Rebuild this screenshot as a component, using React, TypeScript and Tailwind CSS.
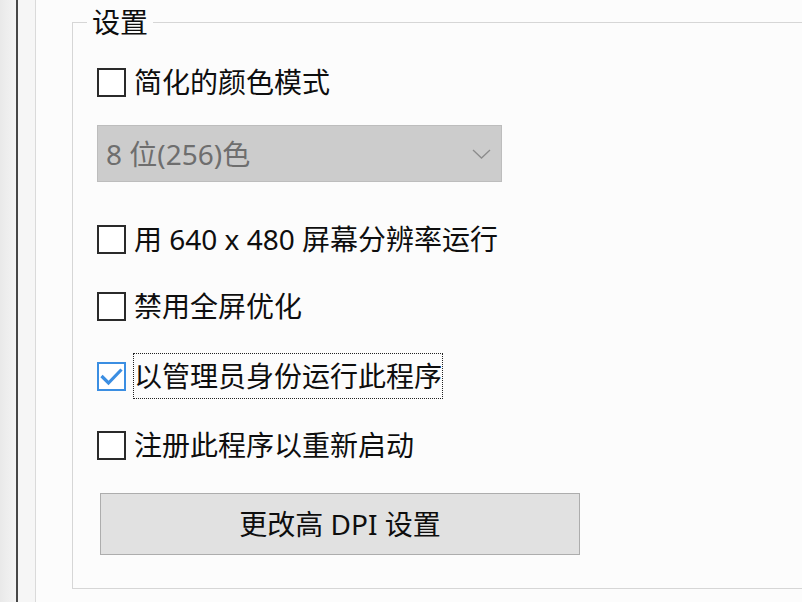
import React from "react";

type Opt = { label: string; checked?: boolean; focused?: boolean; mt: string };

const FONT = { fontFamily: '"Noto Sans", "Noto Sans CJK SC", sans-serif' };

const Check: React.FC<{ checked?: boolean }> = ({ checked }) =>
  checked ? (
    <span className="flex h-[29px] w-[29px] shrink-0 items-center justify-center border-2 border-[#3b8ee2] bg-white">
      <svg width="23" height="19" viewBox="0 0 23 19" fill="none">
        <path d="M1.5 9 L8.5 16 L21.5 2.5" stroke="#3b8ee2" strokeWidth="3.2" />
      </svg>
    </span>
  ) : (
    <span className="block h-[29px] w-[29px] shrink-0 border-2 border-[#2a2a2a] bg-white" />
  );

const Row: React.FC<Opt> = ({ label, checked, focused, mt }) => (
  <div className={`flex h-[46px] items-center ${mt}`}>
    <Check checked={checked} />
    <span
      className={`ml-[7px] flex h-[46px] items-center whitespace-nowrap border text-[28px] leading-none text-[#0e0e0e] ${
        focused ? "border-dotted border-[#222]" : "border-transparent"
      }`}
    >
      {label}
    </span>
  </div>
);

export default function App() {
  return (
    <div className="flex h-[602px] w-full overflow-hidden bg-[#fcfcfc]" style={FONT}>
      {/* window edges on the left */}
      <div className="w-[16px] shrink-0 bg-gradient-to-r from-[#e9e9e9] to-[#f4f4f4]" />
      <div className="w-[2px] shrink-0 bg-[#474747]" />
      <div className="w-[17px] shrink-0 bg-[#f6f6f6]" />
      <div className="w-px shrink-0 bg-[#dadada]" />

      <div className="pl-[36px] pt-[5px]">
        <fieldset className="w-[760px] border border-[#d6d6d6] pb-[33px] pl-[24px]">
          <legend className="-ml-[10px] px-[5px] text-[28px] leading-[34px] text-[#0e0e0e]">设置</legend>

          <Row label="简化的颜色模式" mt="mt-[20px]" />

          <div className="mt-[20px] flex h-[57px] w-[405px] items-center justify-between border border-[#bdbdbd] bg-[#cccccc] pl-[8px] pr-[10px]">
            <span className="text-[28px] leading-none text-[#6e6e6e]">8 位(256)色</span>
            <svg width="19" height="10" viewBox="0 0 19 10" fill="none">
              <path d="M1 1 L9.5 9 L18 1" stroke="#8c8c8c" strokeWidth="1.3" />
            </svg>
          </div>

          <Row label="用 640 x 480 屏幕分辨率运行" mt="mt-[34px]" />
          <Row label="禁用全屏优化" mt="mt-[21px]" />
          <Row label="以管理员身份运行此程序" checked focused mt="mt-[24px]" />
          <Row label="注册此程序以重新启动" mt="mt-[23px]" />

          <button className="ml-[3px] mt-[25px] flex h-[62px] w-[480px] items-center justify-center border border-[#adadad] bg-[#e1e1e1] text-[28px] leading-none text-[#0e0e0e]">
            更改高 DPI 设置
          </button>
        </fieldset>
      </div>
    </div>
  );
}
